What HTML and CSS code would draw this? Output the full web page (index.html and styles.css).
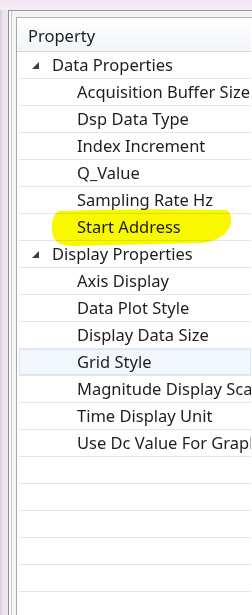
FILE: index.html
```html
<!DOCTYPE html>
<html>
<head>
<meta charset="utf-8">
<link rel="stylesheet" href="styles.css">
</head>
<body>
<div class="page">
  <div class="frame">
    <div class="grid">
      <div class="header">Property</div>
      <div class="row group"><svg class="tri" width="7" height="7" viewBox="0 0 7 7"><polygon points="7,0 7,7 0,7" fill="#3c3c3c"/></svg>Data Properties</div>
      <div class="row item">Acquisition Buffer Size</div>
      <div class="row item">Dsp Data Type</div>
      <div class="row item">Index Increment</div>
      <div class="row item">Q_Value</div>
      <div class="row item">Sampling Rate Hz</div>
      <div class="row item">Start Address</div>
      <div class="row group"><svg class="tri" width="7" height="7" viewBox="0 0 7 7"><polygon points="7,0 7,7 0,7" fill="#3c3c3c"/></svg>Display Properties</div>
      <div class="row item">Axis Display</div>
      <div class="row item">Data Plot Style</div>
      <div class="row item">Display Data Size</div>
      <div class="row item selected">Grid Style</div>
      <div class="row item">Magnitude Display Scale</div>
      <div class="row item">Time Display Unit</div>
      <div class="row item">Use Dc Value For Graph</div>
      <div class="row"></div>
      <div class="row"></div>
      <div class="row"></div>
      <div class="row"></div>
      <div class="row"></div>
      <div class="row"></div>
    </div>
  </div>
  <svg class="mark" width="182" height="40" viewBox="0 0 182 40"><path d="M9,3 Q80,0 175,2 Q181,4 180,14 Q178,30 152,35 L22,38 Q1,38 1,22 Q1,4 9,3 Z" fill="#f8f800"/></svg>
</div>
</body>
</html>
```
FILE: styles.css
```css
html, body {
  margin: 0;
  padding: 0;
}
body {
  width: 252px;
  height: 615px;
  overflow: hidden;
  background: #e9dfec;
  font-family: "Noto Sans", "Open Sans", sans-serif;
  font-size: 16.5px;
  color: #1e1e1e;
}
.page {
  position: relative;
  height: 615px;
  padding: 10px 0 0 8px;
  box-sizing: border-box;
  background: linear-gradient(to bottom, #f1e3f1 0, #f6ecf6 10px, transparent 10px),
              linear-gradient(to right, #d9cbe0 0, #ece2ef 3px, #efe6f1 8px);
}
.frame {
  height: 100%;
  border-left: 1px solid #8c8c94;
  border-top: 1px solid #9a9aa0;
  background: #f4f4f4;
  padding: 6px 0 0 7px;
  box-sizing: border-box;
  box-shadow: inset 2px 0 0 #fafafa, inset 3px 0 0 #c8c8c8;
}
.grid {
  height: 100%;
  border-left: 1px solid #a8a8a8;
  border-top: 1px solid #b4b4b4;
  background: #fff;
  padding-left: 2px;
  padding-right: 1px;
  box-sizing: border-box;
}
.header {
  height: 33px;
  line-height: 35px;
  padding-left: 11px;
  margin-left: -2px;
  background: linear-gradient(to bottom, #ffffff, #f1f4f8);
  border-bottom: 1px solid #d5d8dc;
}
.row {
  height: 26px;
  line-height: 28px;
  border-bottom: 1px solid #e6e6e6;
  white-space: nowrap;
  overflow: hidden;
  display: flex;
  align-items: center;
}
.group {
  padding-left: 13px;
}
.tri {
  margin-right: 13px;
  flex: none;
}
.item {
  padding-left: 58px;
}
.selected {
  background: #f2f7fe;
  box-shadow: inset 0 0 0 1px #d9e7f8;
}
.mark {
  position: absolute;
  left: 51px;
  top: 208px;
  mix-blend-mode: multiply;
}
```
